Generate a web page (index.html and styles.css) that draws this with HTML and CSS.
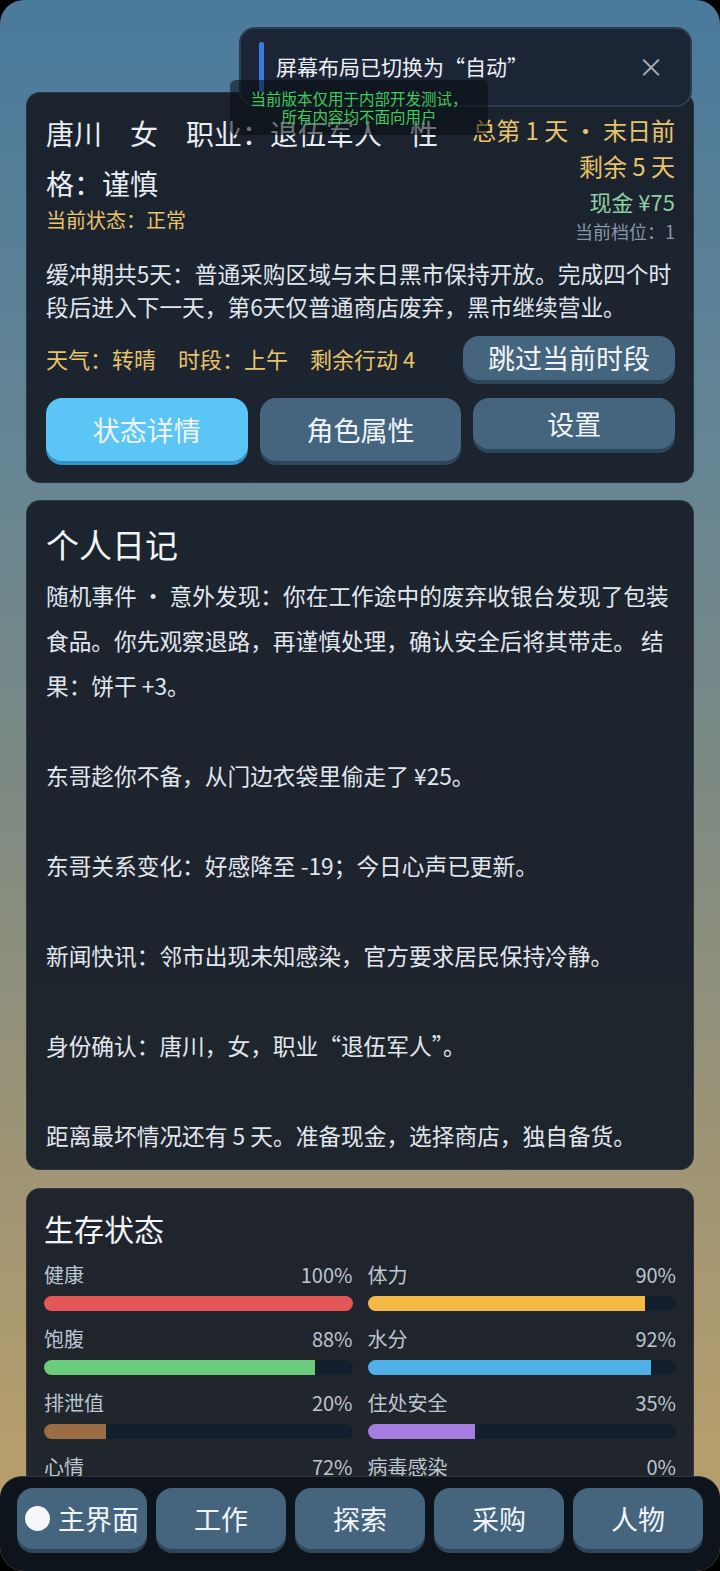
FILE: index.html
```html
<!DOCTYPE html>
<html lang="zh-CN">
<head>
    <meta charset="UTF-8">
    <meta name="viewport" content="width=device-width, initial-scale=1.0">
    <title>末日倒计时</title>
    <link rel="stylesheet" href="styles.css">
</head>
<body>
<div class="app">
    <!-- 顶部提示 -->
    <div class="toast">
        <span class="toast-bar"></span>
        <span class="toast-text">屏幕布局已切换为“自动”</span>
        <span class="toast-close">×</span>
    </div>
    <div class="dev-note">当前版本仅用于内部开发测试，<br>所有内容均不面向用户</div>

    <main class="page">
        <!-- 角色概况 -->
        <section class="card overview">
            <div class="hero">
                <div class="who">
                    <div class="who-name">唐川　女　职业：退伍军人　性格：谨慎</div>
                    <div class="who-state">当前状态：正常</div>
                </div>
                <div class="meta">
                    <div class="meta-day">总第 1 天 · 末日前<br>剩余 5 天</div>
                    <div class="meta-cash">现金 ¥75</div>
                    <div class="meta-tier">当前档位：1</div>
                </div>
            </div>
            <p class="intro">缓冲期共5天：普通采购区域与末日黑市保持开放。完成四个时段后进入下一天，第6天仅普通商店废弃，黑市继续营业。</p>
            <div class="turn">
                <span class="turn-info">天气：转晴　时段：上午　剩余行动 4</span>
                <button class="btn btn-skip">跳过当前时段</button>
            </div>
            <div class="actions">
                <button class="btn btn-tall btn-active">状态详情</button>
                <button class="btn btn-tall">角色属性</button>
                <button class="btn btn-short">设置</button>
            </div>
        </section>

        <!-- 日记 -->
        <section class="card diary">
            <h2 class="diary-title">个人日记</h2>
            <p>随机事件 · 意外发现：你在工作途中的废弃收银台发现了包装食品。你先观察退路，再谨慎处理，确认安全后将其带走。 结果：饼干 +3。</p>
            <p>东哥趁你不备，从门边衣袋里偷走了 ¥25。</p>
            <p>东哥关系变化：好感降至 -19；今日心声已更新。</p>
            <p>新闻快讯：邻市出现未知感染，官方要求居民保持冷静。</p>
            <p>身份确认：唐川，女，职业“退伍军人”。</p>
            <p>距离最坏情况还有 5 天。准备现金，选择商店，独自备货。</p>
        </section>

        <!-- 生存状态 -->
        <section class="card survival">
            <h2 class="survival-title">生存状态</h2>
            <div class="stats">
                <div class="stat">
                    <div class="stat-head"><span>健康</span><span>100%</span></div>
                    <div class="track"><div class="fill fill-red" style="width:100%"></div></div>
                </div>
                <div class="stat">
                    <div class="stat-head"><span>体力</span><span>90%</span></div>
                    <div class="track"><div class="fill fill-yellow" style="width:90%"></div></div>
                </div>
                <div class="stat">
                    <div class="stat-head"><span>饱腹</span><span>88%</span></div>
                    <div class="track"><div class="fill fill-green" style="width:88%"></div></div>
                </div>
                <div class="stat">
                    <div class="stat-head"><span>水分</span><span>92%</span></div>
                    <div class="track"><div class="fill fill-blue" style="width:92%"></div></div>
                </div>
                <div class="stat">
                    <div class="stat-head"><span>排泄值</span><span>20%</span></div>
                    <div class="track"><div class="fill fill-brown" style="width:20%"></div></div>
                </div>
                <div class="stat">
                    <div class="stat-head"><span>住处安全</span><span>35%</span></div>
                    <div class="track"><div class="fill fill-purple" style="width:35%"></div></div>
                </div>
                <div class="stat">
                    <div class="stat-head"><span>心情</span><span>72%</span></div>
                    <div class="track"><div class="fill fill-blue" style="width:72%"></div></div>
                </div>
                <div class="stat">
                    <div class="stat-head"><span>病毒感染</span><span>0%</span></div>
                    <div class="track"><div class="fill fill-red" style="width:0%"></div></div>
                </div>
            </div>
        </section>
    </main>

    <!-- 底部导航 -->
    <nav class="tabbar">
        <button class="tab tab-home"><span class="tab-dot"></span>主界面</button>
        <button class="tab">工作</button>
        <button class="tab">探索</button>
        <button class="tab">采购</button>
        <button class="tab">人物</button>
    </nav>
</div>
</body>
</html>
```

FILE: styles.css
```css
* {
    box-sizing: border-box;
}
body {
    margin: 0;
    background: #000;
    font-family: "Noto Sans CJK SC", "Noto Sans", sans-serif;
    color: #e9eef4;
}
.app {
    position: relative;
    height: 1571px;
    overflow: hidden;
    border-radius: 24px;
    background: linear-gradient(180deg, #4a7a9c 0%, #668593 30%, #7d8a83 50%, #9c9476 72%, #b59d6c 92%, #b89e6a 100%);
}
.page {
    padding: 92px 26px 120px 26px;
}

/* 提示 */
.toast {
    position: absolute;
    top: 27px;
    left: 239px;
    width: 453px;
    height: 80px;
    background: #1b2535;
    border: 2px solid #2c3b4e;
    border-radius: 16px;
    z-index: 5;
}
.toast-bar {
    position: absolute;
    left: 18px;
    top: 13px;
    width: 5px;
    height: 50px;
    background: #3b7be4;
    border-radius: 2px;
}
.toast-text {
    position: absolute;
    left: 35px;
    top: 22px;
    font-size: 21px;
    line-height: 30px;
    color: #eef2f7;
}
.toast-close {
    position: absolute;
    right: 26px;
    top: 22px;
    font-size: 26px;
    line-height: 30px;
    color: #a7b1bf;
}
.dev-note {
    position: absolute;
    top: 80px;
    left: 230px;
    width: 258px;
    height: 55px;
    padding-top: 9px;
    background: rgba(8, 12, 16, 0.55);
    border-radius: 6px;
    color: #3fcb5c;
    font-size: 15.5px;
    line-height: 18px;
    text-align: center;
    z-index: 6;
}

/* 卡片 */
.card {
    background: rgba(23, 30, 40, 0.94);
    border: 1px solid rgba(255, 255, 255, 0.08);
    border-radius: 14px;
    margin-bottom: 17px;
}
.overview {
    padding: 15px 18px 21px 19px;
}
.hero {
    display: flex;
    gap: 8px;
}
.who {
    flex: 1;
}
.who-name {
    font-size: 28px;
    line-height: 50px;
}
.who-state {
    font-size: 20px;
    line-height: 24px;
    color: #e8c36a;
}
.meta {
    flex: 0 0 208px;
    margin-top: 4px;
    text-align: right;
    white-space: nowrap;
}
.meta-day {
    font-size: 24px;
    line-height: 36px;
    color: #e8c36a;
}
.meta-cash {
    font-size: 22px;
    line-height: 34px;
    color: #8fcfa1;
}
.meta-tier {
    font-size: 18px;
    line-height: 26px;
    color: #8a96a6;
}
.intro {
    margin: 13px 0 0 0;
    font-size: 22.7px;
    line-height: 33px;
    color: #e1e7ee;
}
.turn {
    display: flex;
    align-items: center;
    justify-content: space-between;
    margin-top: 13px;
}
.turn-info {
    font-size: 22px;
    color: #e8c36a;
}
.btn {
    font-family: inherit;
    border: none;
    color: #f1f5f9;
    background: #45657f;
    box-shadow: 0 4px 0 #2e465a;
    border-radius: 16px;
    font-size: 27px;
}
.btn-skip {
    width: 212px;
    height: 44px;
    padding: 0;
    line-height: 44px;
}
.actions {
    display: grid;
    grid-template-columns: repeat(3, 1fr);
    gap: 12px;
    align-items: start;
    margin-top: 18px;
}
.btn-tall {
    height: 63px;
}
.btn-short {
    height: 51px;
}
.btn-active {
    background: #5bc5f6;
    box-shadow: 0 4px 0 #3592c4;
}

/* 日记 */
.diary {
    padding: 21px 18px 11px 19px;
    margin-bottom: 18px;
}
.diary-title {
    margin: 0 0 7px 0;
    font-size: 33px;
    font-weight: normal;
    line-height: 44px;
    color: #f2f5f8;
}
.diary p {
    margin: 0 0 45px 0;
    font-size: 22.7px;
    line-height: 45px;
    color: #e1e7ee;
}
.diary p:last-child {
    margin-bottom: 0;
}

/* 生存状态 */
.survival {
    padding: 19px 17px 20px 17px;
}
.survival-title {
    margin: 0 0 13px 0;
    font-size: 30px;
    font-weight: normal;
    line-height: 40px;
    color: #f2f5f8;
}
.stats {
    display: grid;
    grid-template-columns: 1fr 1fr;
    column-gap: 15px;
    row-gap: 14px;
}
.stat-head {
    display: flex;
    justify-content: space-between;
    font-size: 20px;
    line-height: 28px;
    color: #bcc5d0;
}
.track {
    margin-top: 7px;
    height: 15px;
    border-radius: 8px;
    background: #131f2c;
    overflow: hidden;
}
.fill {
    height: 100%;
}
.fill-red { background: #e35757; }
.fill-yellow { background: #f5ba45; }
.fill-green { background: #6bcc7b; }
.fill-blue { background: #4fb1e7; }
.fill-brown { background: #9a6d44; }
.fill-purple { background: #a67de0; }

/* 底部导航 */
.tabbar {
    position: absolute;
    left: 0;
    right: 0;
    bottom: 0;
    height: 95px;
    display: flex;
    gap: 9px;
    padding: 11px 17px 0 17px;
    background: #0e141b;
    border-top: 1px solid #2a3440;
    border-radius: 22px 22px 0 0;
    z-index: 4;
}
.tab {
    flex: 1;
    height: 61px;
    display: flex;
    align-items: center;
    justify-content: center;
    gap: 8px;
    padding: 0;
    font-family: inherit;
    font-size: 27px;
    color: #f1f5f9;
    border: none;
    background: #45657f;
    box-shadow: 0 4px 0 #2e465a;
    border-radius: 16px;
}
.tab-dot {
    width: 25px;
    height: 25px;
    border-radius: 50%;
    background: #f4f6fa;
}
```
